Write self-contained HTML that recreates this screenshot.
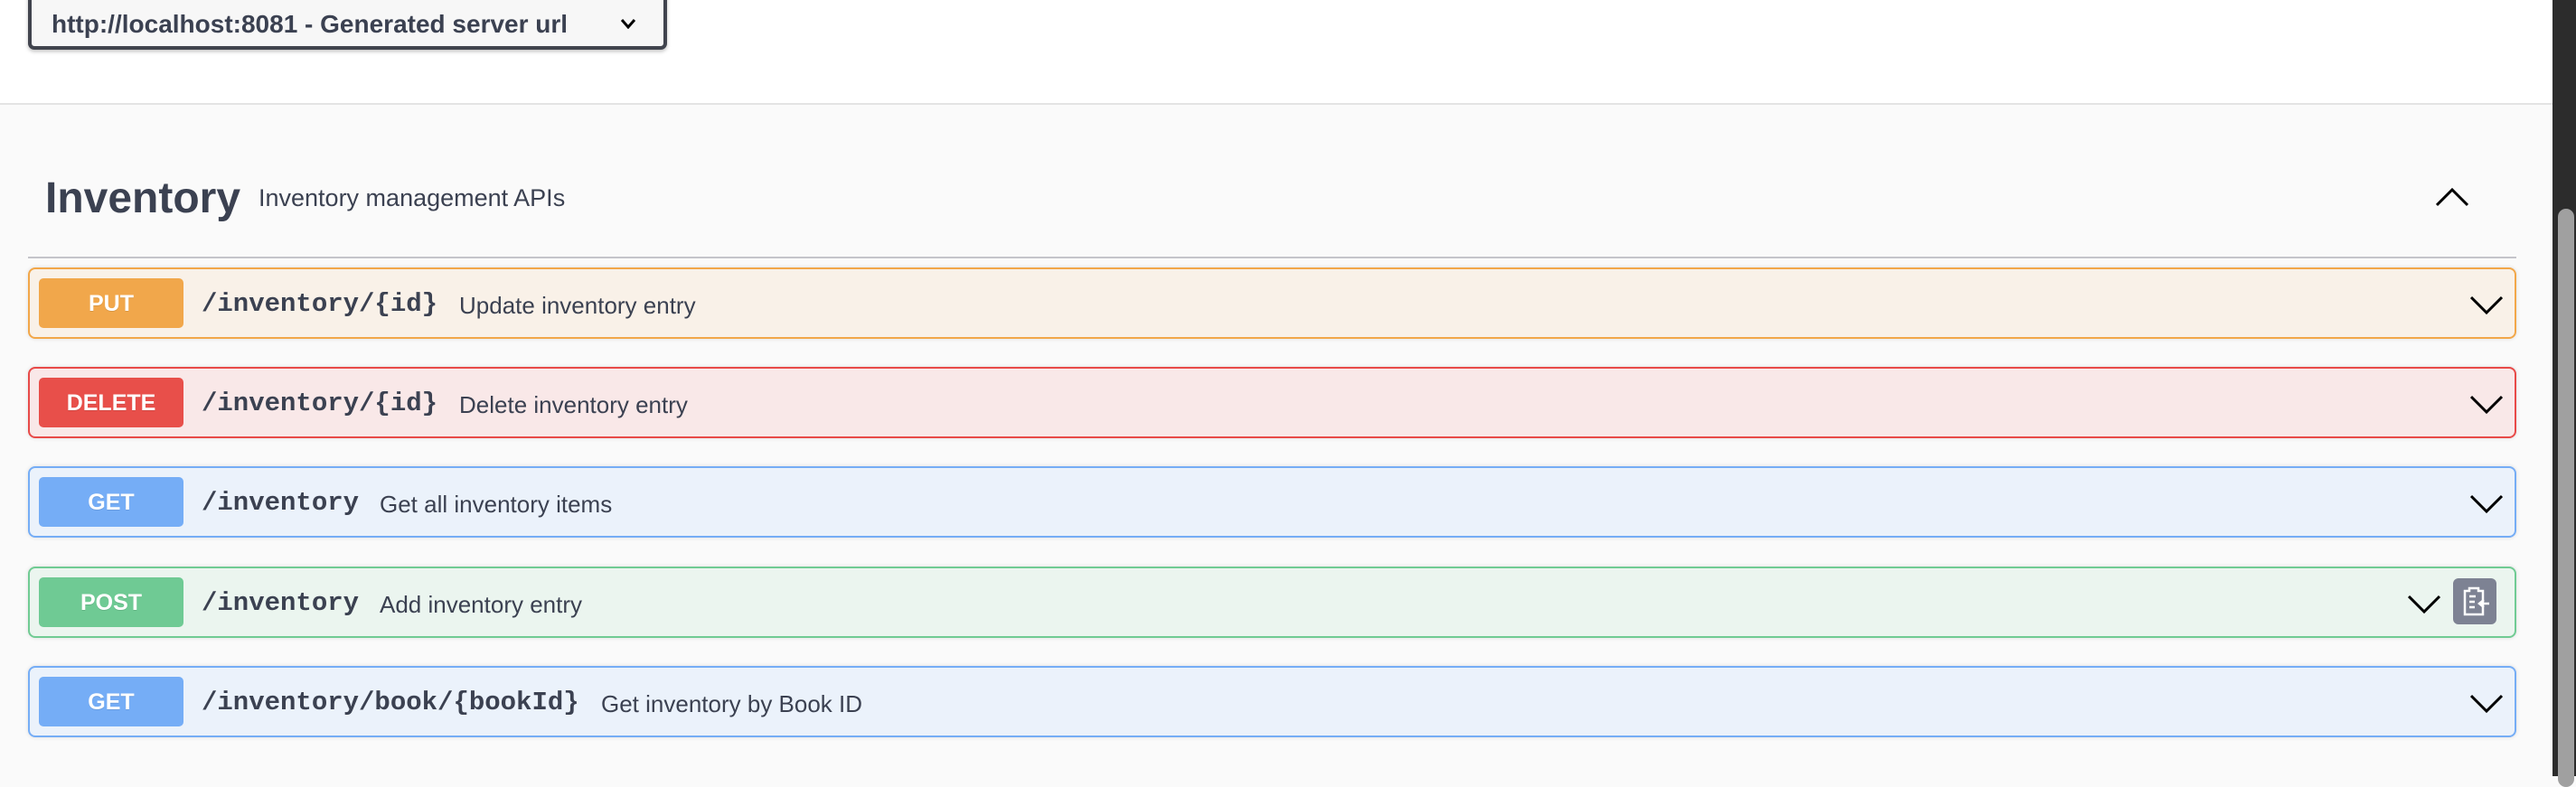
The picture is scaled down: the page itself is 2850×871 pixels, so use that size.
<!DOCTYPE html>
<html><head><meta charset="utf-8"><style>
*{margin:0;padding:0;box-sizing:border-box}
body{width:2850px;height:859px;overflow:hidden;background:#fafafa;font-family:"Liberation Sans",sans-serif;position:relative}
.top{position:absolute;left:0;top:0;width:2824px;height:116px;background:#fff;border-bottom:2px solid #e4e4e4}
.sel{position:absolute;left:31px;top:-10px;width:707px;height:65px;border:4px solid #41444e;border-radius:7px;background:#f7f7f7;box-shadow:0 2px 4px rgba(0,0,0,.25);font-weight:bold;font-size:28px;color:#3b4151;padding:17px 0 0 22px}
.sel svg{position:absolute;right:30px;top:26px}
.h{position:absolute;left:50px;top:192px;font-size:48px;font-weight:bold;color:#3b4151}
.hd{position:absolute;left:286px;top:204px;font-size:27px;color:#3b4151}
.hr{position:absolute;left:31px;top:284px;width:2753px;height:2px;background:#c4c4ca}
.row{position:absolute;left:31px;width:2753px;height:79px;border:2px solid;border-radius:8px;box-shadow:0 0 5px rgba(0,0,0,.12)}
.b{position:absolute;left:10px;top:10px;width:160px;height:55px;border-radius:5px;color:#fff;font-weight:bold;font-size:25px;text-align:center;line-height:57px;text-shadow:0 1px 0 rgba(0,0,0,.1)}
.p{position:absolute;left:190px;top:22px;font-family:"Liberation Mono",monospace;font-weight:bold;font-size:29px;color:#3b4151}
.s{position:absolute;top:25px;font-size:26px;color:#3b4151}
.ch{position:absolute;right:13px;top:29px}
.scroll{position:absolute;left:2824px;top:0;width:26px;height:859px;background:#2c2c2c}
.thumb{position:absolute;left:6px;top:231px;width:18px;height:640px;background:#a0a0a0;border-radius:9px}
</style></head><body>
<div class="top"><div class="sel">http://localhost:8081 - Generated server url<svg width="18" height="12" viewBox="0 0 18 12"><path d="M2 2l7 8 7-8" fill="none" stroke="#000" stroke-width="3"/></svg></div></div>
<div class="h">Inventory</div><div class="hd">Inventory management APIs</div>
<svg style="position:absolute;left:2695px;top:207px" width="36" height="22" viewBox="0 0 36 22"><path d="M1 20L18 3l17 17" fill="none" stroke="#000" stroke-width="3"/></svg>
<div class="hr"></div>

<div class="row" style="top:296px;border-color:#f2a749;background:#f9f1e8"><div class="b" style="background:#f1a74b">PUT</div><div class="p">/inventory/{id}</div><div class="s" style="left:475px">Update inventory entry</div><svg class="ch" width="36" height="22" viewBox="0 0 36 22"><path d="M1 2l17 17 17-17" fill="none" stroke="#000" stroke-width="3"/></svg></div>

<div class="row" style="top:406px;border-color:#e84a48;background:#f9e8e8"><div class="b" style="background:#e84f4a">DELETE</div><div class="p">/inventory/{id}</div><div class="s" style="left:475px">Delete inventory entry</div><svg class="ch" width="36" height="22" viewBox="0 0 36 22"><path d="M1 2l17 17 17-17" fill="none" stroke="#000" stroke-width="3"/></svg></div>

<div class="row" style="top:516px;border-color:#75adf6;background:#ebf2fb"><div class="b" style="background:#75adf6">GET</div><div class="p">/inventory</div><div class="s" style="left:387px">Get all inventory items</div><svg class="ch" width="36" height="22" viewBox="0 0 36 22"><path d="M1 2l17 17 17-17" fill="none" stroke="#000" stroke-width="3"/></svg></div>

<div class="row" style="top:627px;border-color:#70cb93;background:#ebf5ef"><div class="b" style="background:#6fca94">POST</div><div class="p">/inventory</div><div class="s" style="left:387px">Add inventory entry</div><svg style="position:absolute;right:82px;top:29px" width="36" height="22" viewBox="0 0 36 22"><path d="M1 2l17 17 17-17" fill="none" stroke="#000" stroke-width="3"/></svg>
<div style="position:absolute;right:20px;top:11px;width:48px;height:51px;background:#7d8293;border-radius:6px"><svg width="48" height="51" viewBox="0 0 48 51"><path d="M13 14h5v-3h10v3h5v26H13z" fill="none" stroke="#fff" stroke-width="2.5"/><path d="M18 20h7M18 26h6M18 32h6M30 28h10M34 24l-5 4 5 4" fill="none" stroke="#fff" stroke-width="2.5"/></svg></div></div>

<div class="row" style="top:737px;border-color:#75adf6;background:#ebf2fb"><div class="b" style="background:#75adf6">GET</div><div class="p">/inventory/book/{bookId}</div><div class="s" style="left:632px">Get inventory by Book ID</div><svg class="ch" width="36" height="22" viewBox="0 0 36 22"><path d="M1 2l17 17 17-17" fill="none" stroke="#000" stroke-width="3"/></svg></div>

<div class="scroll"><div class="thumb"></div></div>
</body></html>
